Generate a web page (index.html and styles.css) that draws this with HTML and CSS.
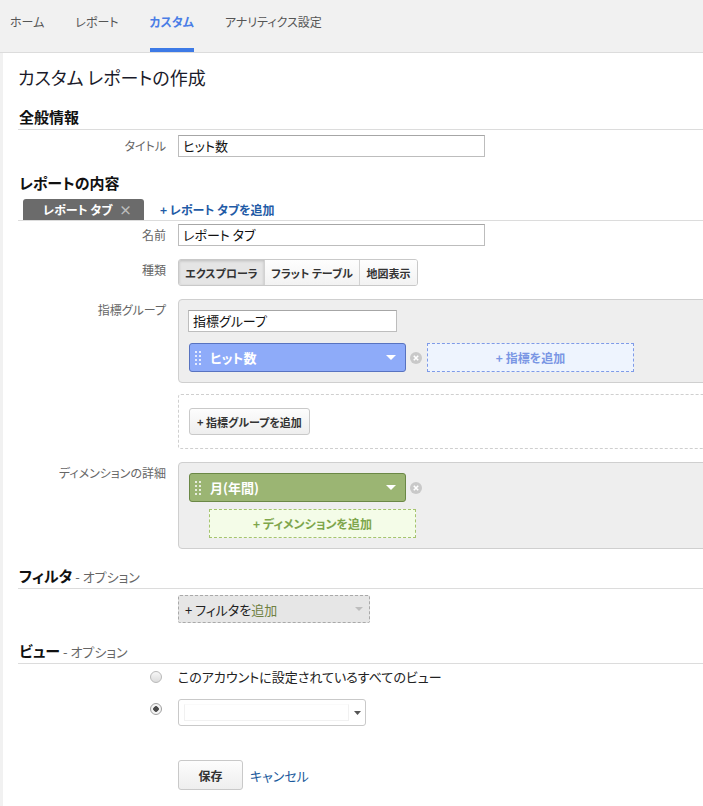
FILE: index.html
```html
<!DOCTYPE html>
<html lang="ja">
<head>
<meta charset="utf-8">
<title>カスタム レポートの作成</title>
<link rel="stylesheet" href="styles.css">
</head>
<body>
<nav class="topnav">
  <a class="nav-item">ホーム</a>
  <a class="nav-item">レポート</a>
  <a class="nav-item active">カスタム</a>
  <a class="nav-item">アナリティクス設定</a>
</nav>
<main class="page">
  <h1 class="page-title">カスタム レポートの作成</h1>

  <h2 class="section-head">全般情報</h2>
  <div class="row row-first">
    <div class="row-label">タイトル</div>
    <div class="row-field"><div class="text-input wide">ヒット数</div></div>
  </div>

  <h2 class="section-head plain">レポートの内容</h2>
  <div class="tabbar">
    <div class="tab"><span>レポート タブ</span><span class="tab-close">×</span></div>
    <a class="tab-add">+ レポート タブを追加</a>
  </div>
  <div class="row row-name">
    <div class="row-label">名前</div>
    <div class="row-field"><div class="text-input wide">レポート タブ</div></div>
  </div>
  <div class="row row-gap">
    <div class="row-label">種類</div>
    <div class="row-field">
      <div class="seg">
        <span class="seg-btn on w1">エクスプローラ</span>
        <span class="seg-btn w2">フラット テーブル</span>
        <span class="seg-btn w3">地図表示</span>
      </div>
    </div>
  </div>
  <div class="row row-gap">
    <div class="row-label">指標グループ</div>
    <div class="row-field">
      <div class="group-box">
        <div class="text-input group-name">指標グループ</div>
        <div class="chip-row">
          <div class="chip chip-blue">
            <svg class="grip" width="6" height="14" viewBox="0 0 6 14"><g fill="#fff" fill-opacity=".75"><rect x="0" y="0" width="2" height="2"/><rect x="4" y="0" width="2" height="2"/><rect x="0" y="4" width="2" height="2"/><rect x="4" y="4" width="2" height="2"/><rect x="0" y="8" width="2" height="2"/><rect x="4" y="8" width="2" height="2"/><rect x="0" y="12" width="2" height="2"/><rect x="4" y="12" width="2" height="2"/></g></svg>
            <span class="chip-text">ヒット数</span>
            <svg class="caret" width="10" height="5" viewBox="0 0 10 5"><path d="M0 0h10L5 5z" fill="#fff"/></svg>
          </div>
          <svg class="remove" width="12" height="12" viewBox="0 0 12 12"><circle cx="6" cy="6" r="6" fill="#c9c9c9"/><path d="M3.8 3.8l4.4 4.4M8.2 3.8l-4.4 4.4" stroke="#fff" stroke-width="1.6"/></svg>
          <div class="add-box add-blue">+ 指標を追加</div>
        </div>
      </div>
    </div>
  </div>
  <div class="row row-gap-s">
    <div class="row-label"></div>
    <div class="row-field">
      <div class="dashed-box">
        <span class="btn">+ 指標グループを追加</span>
      </div>
    </div>
  </div>
  <div class="row row-gap">
    <div class="row-label">ディメンションの詳細</div>
    <div class="row-field">
      <div class="group-box">
        <div class="chip-row chip-row-top">
          <div class="chip chip-green">
            <svg class="grip" width="6" height="14" viewBox="0 0 6 14"><g fill="#fff" fill-opacity=".75"><rect x="0" y="0" width="2" height="2"/><rect x="4" y="0" width="2" height="2"/><rect x="0" y="4" width="2" height="2"/><rect x="4" y="4" width="2" height="2"/><rect x="0" y="8" width="2" height="2"/><rect x="4" y="8" width="2" height="2"/><rect x="0" y="12" width="2" height="2"/><rect x="4" y="12" width="2" height="2"/></g></svg>
            <span class="chip-text">月(年間)</span>
            <svg class="caret" width="10" height="5" viewBox="0 0 10 5"><path d="M0 0h10L5 5z" fill="#fff"/></svg>
          </div>
          <svg class="remove" width="12" height="12" viewBox="0 0 12 12"><circle cx="6" cy="6" r="6" fill="#c9c9c9"/><path d="M3.8 3.8l4.4 4.4M8.2 3.8l-4.4 4.4" stroke="#fff" stroke-width="1.6"/></svg>
        </div>
        <div class="add-box add-green">+ ディメンションを追加</div>
      </div>
    </div>
  </div>

  <h2 class="section-head sec-filter">フィルタ<span class="opt"> - オプション</span></h2>
  <div class="row row-filter">
    <div class="row-label"></div>
    <div class="row-field">
      <div class="filter-drop">
        <span>+ フィルタを<span class="green">追加</span></span>
        <svg class="fcaret" width="8" height="4" viewBox="0 0 8 4"><path d="M0 0h8L4 4z" fill="#bdbdbd"/></svg>
      </div>
    </div>
  </div>

  <h2 class="section-head sec-view">ビュー<span class="opt"> - オプション</span></h2>
  <div class="row radio-row1">
    <div class="row-label radio-col"><span class="radio"></span></div>
    <div class="row-field radio-text">このアカウントに設定されているすべてのビュー</div>
  </div>
  <div class="row radio-row2">
    <div class="row-label radio-col"><span class="radio checked"></span></div>
    <div class="row-field">
      <div class="select">
        <span class="select-inner"></span>
        <svg class="scaret" width="7" height="4" viewBox="0 0 7 4"><path d="M0 0h7L3.5 4z" fill="#555"/></svg>
      </div>
    </div>
  </div>
  <div class="row save-row">
    <div class="row-label"></div>
    <div class="row-field actions">
      <span class="btn save">保存</span>
      <a class="cancel">キャンセル</a>
    </div>
  </div>
</main>
</body>
</html>
```
FILE: styles.css
```css
* { box-sizing: border-box; }
html, body { margin: 0; padding: 0; }
body {
  width: 703px;
  height: 806px;
  overflow: hidden;
  background: #f1f1f1;
  font-family: "Noto Sans CJK JP", "Noto Sans", sans-serif;
  font-feature-settings: "palt";
  font-size: 13px;
  color: #222;
}
a { cursor: pointer; }

.topnav {
  display: flex;
  gap: 31px;
  height: 53px;
  padding-left: 10px;
  border-bottom: 1px solid #dcdcdc;
}
.nav-item {
  height: 52px;
  padding-top: 13px;
  font-size: 12px;
  line-height: 18px;
  color: #555;
}
.nav-item.active {
  color: #4a7de6;
  font-weight: bold;
  border-bottom: 4px solid #3d7ae6;
}

.page {
  width: 760px;
  min-height: 760px;
  margin-left: 3px;
  background: #fff;
  padding: 12px 0 0 15px;
}
.page-title {
  margin: 0;
  font-size: 18px;
  font-weight: normal;
  line-height: 24px;
  color: #1a1a2a;
}
.section-head {
  margin: 18px 0 0;
  font-size: 15px;
  font-weight: bold;
  line-height: 20px;
  padding: 0 0 2px 1px;
  border-bottom: 1px solid #dcdcdc;
  color: #111;
}
.section-head.plain { margin-top: 16px; border-bottom: 0; padding-bottom: 0; }
.section-head.sec-filter { margin-top: 17px; padding-bottom: 1px; }
.section-head.sec-view { margin-top: 18px; padding-bottom: 1px; }
.opt { font-size: 13px; font-weight: normal; color: #666; }

.row { display: flex; }
.row-label {
  flex: 0 0 160px;
  padding: 3px 12px 0 0;
  text-align: right;
  font-size: 12px;
  line-height: 16px;
  color: #666;
}
.row-field { flex: 1; min-width: 0; }
.row-first { margin-top: 5px; }
.row-name { margin-top: 3px; }
.row-gap { margin-top: 13px; }
.row-gap-s { margin-top: 11px; }

.text-input {
  height: 22px;
  border: 1px solid #bdbdbd;
  border-top-color: #a6a6a6;
  background: #fff;
  padding: 0 4px;
  line-height: 20px;
  font-size: 13px;
  color: #111;
}
.text-input.wide { width: 307px; }

.tabbar {
  display: flex;
  align-items: center;
  height: 22px;
  margin-top: 6px;
  padding-left: 5px;
  border-bottom: 1px solid #dcdcdc;
}
.tab {
  display: flex;
  align-items: center;
  align-self: flex-start;
  width: 121px;
  height: 21px;
  padding-left: 20px;
  background: #6b6b6b;
  border-radius: 3px 3px 0 0;
  color: #fff;
  font-size: 12px;
  font-weight: bold;
}
.tab-close { margin-left: auto; margin-right: 12px; color: #bdbdbd; font-size: 13px; font-weight: bold; }
.tab-add {
  margin-left: 16px;
  color: #1f5ba6;
  font-size: 12px;
  font-weight: bold;
}

.seg {
  display: flex;
  width: 240px;
  height: 27px;
  border: 1px solid #c9c9c9;
  border-radius: 3px;
  overflow: hidden;
}
.seg-btn {
  display: flex;
  align-items: center;
  justify-content: center;
  font-size: 11px;
  font-weight: bold;
  color: #333;
  background: linear-gradient(#fefefe, #f2f2f2);
  border-left: 1px solid #d2d2d2;
}
.seg-btn:first-child { border-left: 0; }
.seg-btn.on { background: #e5e5e5; box-shadow: inset 0 1px 3px rgba(0,0,0,.18); }
.w1 { width: 85px; }
.w2 { width: 95px; }
.w3 { flex: 1; }

.group-box {
  width: 100%;
  background: #eeeeee;
  border: 1px solid #cfcfcf;
  border-radius: 4px;
  padding: 10px 10px 10px 9px;
}
.group-name { width: 209px; }
.chip-row { display: flex; align-items: center; margin-top: 11px; padding-left: 1px; }
.chip-row-top { margin-top: 0; }
.chip {
  display: flex;
  align-items: center;
  width: 217px;
  height: 29px;
  border: 1px solid;
  border-radius: 3px;
  padding-left: 5px;
  color: #fff;
  font-size: 13px;
  font-weight: bold;
}
.chip-blue { background: #8eabf9; border-color: #5873c0; }
.chip-green { background: #9bb573; border-color: #6b8846; }
.grip { flex: none; }
.chip-text { margin-left: 9px; }
.caret { margin-left: auto; margin-right: 9px; }
.remove { margin-left: 4px; flex: none; }
.add-box {
  display: flex;
  align-items: center;
  justify-content: center;
  width: 207px;
  height: 29px;
  border: 1px dashed;
  font-size: 12px;
  font-weight: bold;
}
.add-blue { margin-left: 5px; background: #eef4fe; border-color: #7f9be8; color: #7a96e4; }
.add-green { margin: 7px 0 0 21px; background: #f4fce8; border-color: #a5c46f; color: #7ea64b; }

.dashed-box {
  width: 100%;
  border: 1px dashed #cfcfcf;
  border-radius: 3px;
  padding: 13px 10px 13px 10px;
}
.btn {
  display: inline-flex;
  align-items: center;
  justify-content: center;
  height: 27px;
  padding: 0 7px;
  border: 1px solid #c9c9c9;
  border-radius: 3px;
  background: linear-gradient(#fdfdfd, #eeeeee);
  font-size: 11px;
  font-weight: bold;
  color: #333;
}

.row-filter { margin-top: 6px; }
.filter-drop {
  display: flex;
  align-items: center;
  width: 192px;
  height: 28px;
  padding: 0 6px 0 6px;
  background: #e6e6e6;
  border: 1px dashed #a9a9a9;
  border-radius: 2px;
  font-size: 13px;
  color: #222;
}
.green { color: #6e803f; }
.fcaret { margin-left: auto; }

.radio-row1 { margin-top: 4px; }
.radio-row2 { margin-top: 13px; }
.radio-col { display: flex; justify-content: flex-end; padding: 0 16px 0 0; }
.radio {
  display: block;
  width: 12px;
  height: 12px;
  border-radius: 50%;
  border: 1px solid #b9b9b9;
  background: linear-gradient(#f7f7f7, #dcdcdc);
}
.radio-row1 .radio { margin-top: 3px; }
.radio-row2 .radio { margin-top: 4px; }
.radio.checked {
  background: radial-gradient(circle, #4a4a4a 0 2.5px, #f4f4f4 3px);
  border-color: #a0a0a0;
}
.radio-text { font-size: 13px; line-height: 18px; color: #222; padding-left: 0; }
.select {
  display: flex;
  align-items: center;
  width: 188px;
  height: 27px;
  padding-left: 5px;
  border: 1px solid #c9c9c9;
  border-radius: 3px;
  background: #fff;
}
.select-inner {
  width: 165px;
  height: 17px;
  border: 1px solid #f1f1f1;
  border-top-color: #fafafa;
}
.scaret { margin-left: 5px; }

.save-row { margin-top: 34px; }
.actions { display: flex; align-items: center; }
.btn.save { width: 65px; height: 30px; font-size: 12px; }
.cancel { margin-left: 7px; color: #1a5a9c; font-size: 13px; }
```
